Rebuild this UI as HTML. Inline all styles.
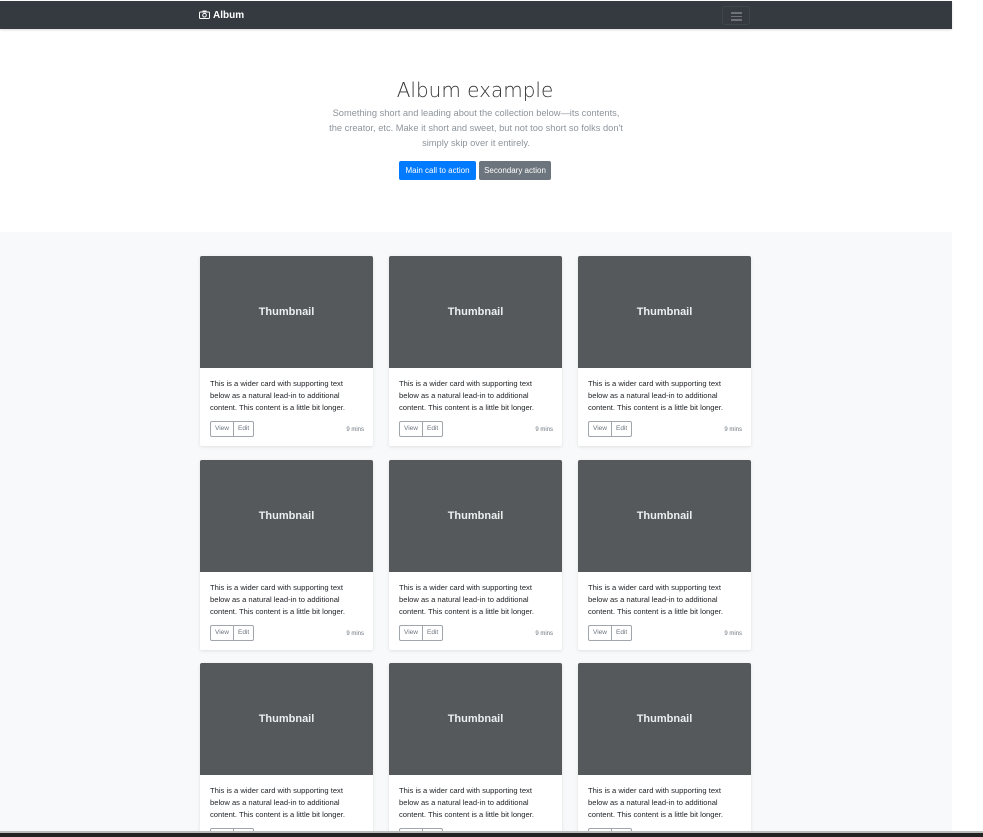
<!DOCTYPE html>
<html style="overflow:hidden;width:983px;height:837px"><head><style>
*{box-sizing:border-box;margin:0;padding:0}
body{width:983px;height:837px;overflow:hidden;background:#fff;font-family:"Liberation Sans",sans-serif;position:relative}
.nav{position:absolute;left:0;top:1px;width:952px;height:28px;background:#343a40;box-shadow:0 1px 2px rgba(0,0,0,.15)}
.brand{position:absolute;left:199px;top:9px;color:#fff;font-weight:bold;font-size:10px;line-height:12px}
.brand svg{vertical-align:-1px;margin-right:3px}
.tog{position:absolute;left:722px;top:5px;width:28px;height:19px;border:1px solid #3f454b;border-radius:3px}
.tog i{position:absolute;left:8px;width:11px;height:1.5px;background:#6f7378}
.hero{position:absolute;left:0;top:29px;width:952px;height:203px;text-align:center}
h1{position:absolute;top:49px;left:0;width:950px;font-size:20px;color:#333;line-height:24px;font-family:"DejaVu Sans","Liberation Sans",sans-serif;font-weight:200}
.lead{position:absolute;top:77px;left:326px;width:300px;font-size:9.3px;line-height:14.8px;color:#8d949a}
.b{position:absolute;top:132px;height:19px;font-size:8px;line-height:19px;color:#fff;border-radius:2px;text-align:center}
.album{position:absolute;left:0;top:232px;width:952px;height:599px;background:#f8f9fa;overflow:hidden}
.card{position:absolute;width:173px;height:190px;background:#fff;border-radius:2px;box-shadow:0 1px 3px rgba(0,0,0,.1);overflow:hidden}
.th{height:112px;background:#55595c;color:#eceeef;font-weight:bold;font-size:11px;text-align:center;line-height:112px}
.tx{position:absolute;left:10px;top:122px;font-size:7.6px;line-height:12px;color:#212529;width:150px}
.bg{position:absolute;left:10px;top:165px;height:16px;border:1px solid #a0a6ab;border-radius:2px;font-size:6.5px;color:#6c757d;display:flex}
.bg span{line-height:14px;padding:0 4px}
.bg span+span{border-left:1px solid #a0a6ab}
.mins{position:absolute;right:9px;top:171px;font-size:6px;color:#6c757d}
.bot{position:absolute;left:0;top:831px;width:983px;height:2px;background:#bbb}
.bot2{position:absolute;left:0;top:833px;width:983px;height:4px;background:#222}
</style></head><body>
<div class="nav"><div class="brand"><svg width="11" height="9" viewBox="0 0 11 9"><rect x=".5" y="2" width="10" height="6.5" rx="1" fill="none" stroke="#fff"/><rect x="3.5" y=".5" width="4" height="2" fill="#fff"/><circle cx="5.5" cy="5.2" r="1.8" fill="none" stroke="#fff"/></svg>Album</div>
<div class="tog"><i style="top:5px"></i><i style="top:8.5px"></i><i style="top:12px"></i></div></div>
<div class="hero">
<h1>Album example</h1>
<div class="lead">Something short and leading about the collection below—its contents, the creator, etc. Make it short and sweet, but not too short so folks don't simply skip over it entirely.</div>
<div class="b" style="left:399px;width:77px;background:#007bff">Main call to action</div>
<div class="b" style="left:479px;width:72px;background:#6c757d">Secondary action</div>
</div>
<div class="album">
<div class="card" style="left:200px;top:24px"><div class="th">Thumbnail</div><div class="tx">This is a wider card with supporting text below as a natural lead-in to additional content. This content is a little bit longer.</div><div class="bg"><span>View</span><span>Edit</span></div><div class="mins">9 mins</div></div>
<div class="card" style="left:389px;top:24px"><div class="th">Thumbnail</div><div class="tx">This is a wider card with supporting text below as a natural lead-in to additional content. This content is a little bit longer.</div><div class="bg"><span>View</span><span>Edit</span></div><div class="mins">9 mins</div></div>
<div class="card" style="left:578px;top:24px"><div class="th">Thumbnail</div><div class="tx">This is a wider card with supporting text below as a natural lead-in to additional content. This content is a little bit longer.</div><div class="bg"><span>View</span><span>Edit</span></div><div class="mins">9 mins</div></div>
<div class="card" style="left:200px;top:228px"><div class="th">Thumbnail</div><div class="tx">This is a wider card with supporting text below as a natural lead-in to additional content. This content is a little bit longer.</div><div class="bg"><span>View</span><span>Edit</span></div><div class="mins">9 mins</div></div>
<div class="card" style="left:389px;top:228px"><div class="th">Thumbnail</div><div class="tx">This is a wider card with supporting text below as a natural lead-in to additional content. This content is a little bit longer.</div><div class="bg"><span>View</span><span>Edit</span></div><div class="mins">9 mins</div></div>
<div class="card" style="left:578px;top:228px"><div class="th">Thumbnail</div><div class="tx">This is a wider card with supporting text below as a natural lead-in to additional content. This content is a little bit longer.</div><div class="bg"><span>View</span><span>Edit</span></div><div class="mins">9 mins</div></div>
<div class="card" style="left:200px;top:431px"><div class="th">Thumbnail</div><div class="tx">This is a wider card with supporting text below as a natural lead-in to additional content. This content is a little bit longer.</div><div class="bg"><span>View</span><span>Edit</span></div><div class="mins">9 mins</div></div>
<div class="card" style="left:389px;top:431px"><div class="th">Thumbnail</div><div class="tx">This is a wider card with supporting text below as a natural lead-in to additional content. This content is a little bit longer.</div><div class="bg"><span>View</span><span>Edit</span></div><div class="mins">9 mins</div></div>
<div class="card" style="left:578px;top:431px"><div class="th">Thumbnail</div><div class="tx">This is a wider card with supporting text below as a natural lead-in to additional content. This content is a little bit longer.</div><div class="bg"><span>View</span><span>Edit</span></div><div class="mins">9 mins</div></div>
</div>
<div class="bot"></div><div class="bot2"></div>
</body></html>
